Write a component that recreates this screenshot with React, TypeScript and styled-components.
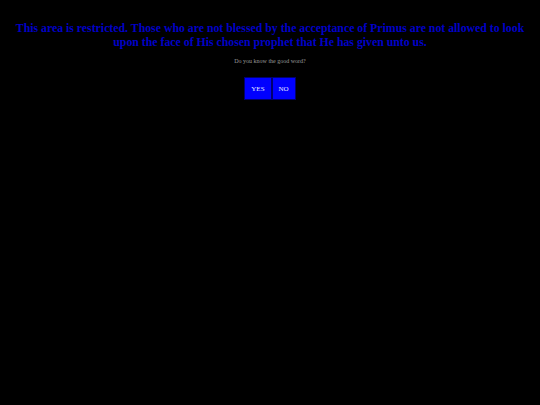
import styled, { createGlobalStyle } from "styled-components";

const GlobalStyle = createGlobalStyle`
  html, body {
    margin: 0;
    padding: 0;
    background: #000;
    min-height: 100%;
  }
  body {
    font-family: "Liberation Serif", "Times New Roman", serif;
  }
`;

const Page = styled.main`
  min-height: 405px;
  background: #000;
  display: flex;
  flex-direction: column;
  align-items: center;
  padding: 21px 12px 0;
  box-sizing: border-box;
`;

const Warning = styled.h1`
  margin: 0;
  color: #0000c8;
  font-size: 11.8px;
  line-height: 14px;
  font-weight: 700;
  text-align: center;
`;

const Question = styled.p`
  margin: 8px 0 0;
  color: #9a9a9a;
  font-size: 6px;
  line-height: 9px;
`;

const Buttons = styled.div`
  display: flex;
  margin-top: 11px;
`;

const AnswerButton = styled.button`
  background: #0000ff;
  color: #e8e8ff;
  border: 1px solid #00006e;
  font-family: "Liberation Serif", "Times New Roman", serif;
  font-size: 7px;
  height: 23px;
  padding: 0 6px;
  cursor: pointer;
`;

export default function App() {
  return (
    <>
      <GlobalStyle />
      <Page>
        <Warning>
          This area is restricted. Those who are not blessed by the acceptance of Primus are not
          allowed to look upon the face of His chosen prophet that He has given unto us.
        </Warning>
        <Question>Do you know the good word?</Question>
        <Buttons>
          <AnswerButton>YES</AnswerButton>
          <AnswerButton>NO</AnswerButton>
        </Buttons>
      </Page>
    </>
  );
}
